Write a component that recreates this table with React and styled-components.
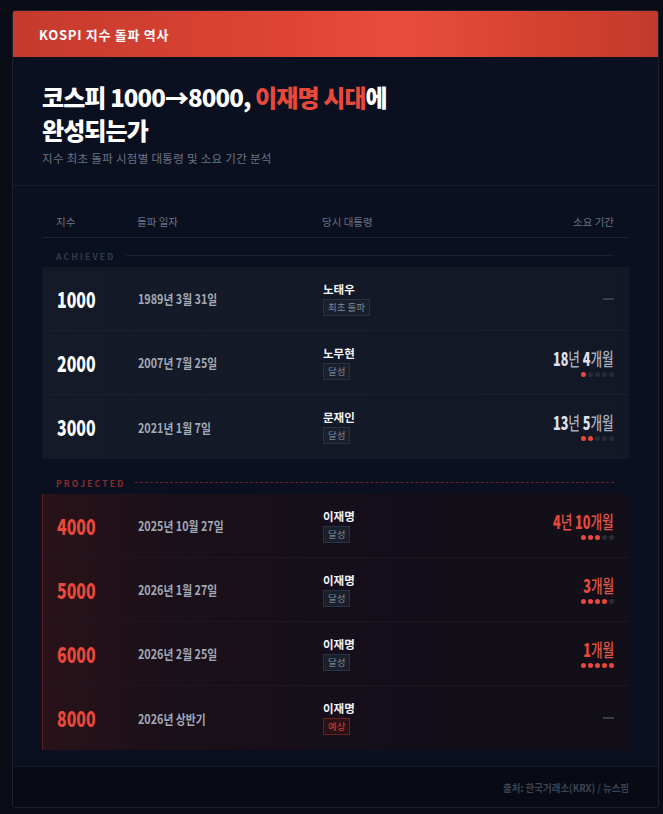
import React from "react";
import styled, { createGlobalStyle } from "styled-components";

const GlobalStyle = createGlobalStyle`
  html, body { margin: 0; padding: 0; background: #090c15; }
  body { font-family: "Noto Sans CJK KR", "Noto Sans", sans-serif; }
`;

// no condensed family is installed, so narrow type is squeezed horizontally
const Narrow = styled.span`
  display: inline-block;
  white-space: nowrap;
  transform: scaleX(${(p) => p.x || 0.78});
  transform-origin: ${(p) => (p.right ? "right" : "left")} center;
`;

const Page = styled.div`
  padding: 10px 4px 8px 12px;
  background: #090c15;
`;

const Card = styled.div`
  width: 645px;
  border: 1px solid #1b2130;
  border-radius: 3px;
  background: #0b1020;
  overflow: hidden;
`;

const TopBar = styled.div`
  height: 46px;
  display: flex;
  align-items: center;
  padding: 0 26px;
  background: linear-gradient(90deg, #c53a2d 0%, #e04535 45%, #e84d3d 60%, #d2402f 85%, #c23a2c 100%);
  color: #fff;
  font-size: 13px;
  font-weight: 700;
  letter-spacing: 0.7px;
`;

const Intro = styled.div`
  padding: 23px 29px 18px;
  border-bottom: 1px solid #161c2a;
`;

const Title = styled.h1`
  margin: 0;
  font-size: 24px;
  line-height: 33px;
  font-weight: 900;
  letter-spacing: -0.9px;
  color: #ffffff;
`;

const Accent = styled.span`
  color: #e8493b;
`;

const Subtitle = styled.div`
  margin-top: 3px;
  font-size: 11.5px;
  line-height: 18px;
  color: #6b7385;
  letter-spacing: 0.3px;
`;

const TableArea = styled.div`
  padding: 20px 29px 16px;
  border-bottom: 1px solid #161c2a;
`;

const Grid = `
  display: grid;
  grid-template-columns: 81px 185px 1fr 160px;
  align-items: center;
`;

const HeadRow = styled.div`
  ${Grid}
  height: 31px;
  padding: 0 15px 0 14px;
  border-bottom: 1px solid #1c2232;
  font-size: 10.5px;
  color: #6b7385;
`;

const HeadCell = styled.div`
  text-align: ${(p) => (p.right ? "right" : "left")};
`;

const GroupLabel = styled.div`
  display: flex;
  align-items: center;
  gap: 10px;
  height: 23px;
  margin-top: ${(p) => p.top}px;
  padding: 0 15px 0 14px;
  font-size: 8.5px;
  font-weight: 700;
  letter-spacing: 2.2px;
  color: ${(p) => (p.red ? "#8e2b2b" : "#343c4d")};
  &::after {
    content: "";
    flex: 1;
    border-top: 1px ${(p) => (p.red ? "dashed #6e2327" : "solid #1a2030")};
  }
`;

const Row = styled.div`
  ${Grid}
  height: 64px;
  padding: 0 15px 0 14px;
  box-sizing: border-box;
  border-bottom: 1px solid ${(p) => (p.red ? "#1f1620" : "#1a2030")};
  border-left: 1px solid ${(p) => (p.red ? "#5c1e22" : "transparent")};
  background: ${(p) =>
    p.red
      ? "linear-gradient(90deg, #2a1219 0%, #1a1019 22%, #130f1a 60%, #120f19 100%)"
      : "linear-gradient(90deg, #141a28 0%, #121826 100%)"};
  &:last-child { border-bottom: none; }
`;

const Index = styled.div`
  font-size: 22px;
  font-weight: 900;
  line-height: 26px;
  margin-top: -2px;
  color: ${(p) => (p.red ? "#e8493b" : "#ffffff")};
`;

const DateText = styled.div`
  font-size: 13px;
  font-weight: 700;
  color: #a3a9b6;
`;

const Who = styled.div`
  display: flex;
  flex-direction: column;
  align-items: flex-start;
  gap: 3px;
`;

const Name = styled.div`
  font-size: 11.5px;
  font-weight: 700;
  color: #f2f4f8;
  line-height: 14px;
`;

const Tag = styled.span`
  font-size: 9.5px;
  line-height: 15px;
  padding: 0 4px;
  border: 1px solid ${(p) => (p.red ? "#6b1d1f" : "#2a3142")};
  background: ${(p) => (p.red ? "#2a1116" : "#1a1f2c")};
  color: ${(p) => (p.red ? "#d04237" : "#7d8596")};
`;

const Span = styled.div`
  display: flex;
  flex-direction: column;
  align-items: flex-end;
  gap: 5px;
`;

const Duration = styled.div`
  font-size: 18px;
  font-weight: 900;
  line-height: 18px;
  color: ${(p) => (p.red ? "#e8493b" : "#dfe2ea")};
`;

const Unit = styled.span`
  font-weight: 500;
  color: ${(p) => (p.red ? "#e25546" : "#a7adba")};
`;

const Dots = styled.div`
  display: flex;
  gap: 2px;
`;

const Dot = styled.i`
  width: 5px;
  height: 5px;
  border-radius: 50%;
  background: ${(p) => (p.on ? "#e8493b" : "#262c3a")};
`;

const Dash = styled.div`
  width: 11px;
  height: 2px;
  background: #363d4c;
`;

const Footer = styled.div`
  height: 40px;
  display: flex;
  align-items: center;
  justify-content: flex-end;
  padding: 0 29px;
  background: #080b14;
  font-size: 10.5px;
  font-weight: 700;
  color: #3c4353;
`;

const achieved = [
  { idx: "1000", date: "1989년 3월 31일", who: "노태우", tag: "최초 돌파" },
  { idx: "2000", date: "2007년 7월 25일", who: "노무현", tag: "달성", dur: [["18", "년 "], ["4", "개월"]], dots: 1 },
  { idx: "3000", date: "2021년 1월 7일", who: "문재인", tag: "달성", dur: [["13", "년 "], ["5", "개월"]], dots: 2 },
];

const projected = [
  { idx: "4000", date: "2025년 10월 27일", who: "이재명", tag: "달성", dur: [["4", "년 "], ["10", "개월"]], dots: 3 },
  { idx: "5000", date: "2026년 1월 27일", who: "이재명", tag: "달성", dur: [["3", "개월"]], dots: 4 },
  { idx: "6000", date: "2026년 2월 25일", who: "이재명", tag: "달성", dur: [["1", "개월"]], dots: 5 },
  { idx: "8000", date: "2026년 상반기", who: "이재명", tag: "예상", tagRed: true },
];

const Line = ({ item, red }) => (
  <Row red={red}>
    <Index red={red}>
      <Narrow x={0.72}>{item.idx}</Narrow>
    </Index>
    <DateText>
      <Narrow x={0.83}>{item.date}</Narrow>
    </DateText>
    <Who>
      <Name>{item.who}</Name>
      <Tag red={item.tagRed}>{item.tag}</Tag>
    </Who>
    <Span>
      {item.dur ? (
        <>
          <Duration red={red}>
            <Narrow x={0.7} right>
              {item.dur.map(([n, u]) => (
                <React.Fragment key={u}>
                  {n}
                  <Unit red={red}>{u}</Unit>
                </React.Fragment>
              ))}
            </Narrow>
          </Duration>
          <Dots>
            {[0, 1, 2, 3, 4].map((i) => (
              <Dot key={i} on={i < item.dots} />
            ))}
          </Dots>
        </>
      ) : (
        <Dash />
      )}
    </Span>
  </Row>
);

const App = () => (
  <Page>
    <GlobalStyle />
    <Card>
      <TopBar>KOSPI 지수 돌파 역사</TopBar>
      <Intro>
        <Title>
          코스피 1000→8000, <Accent>이재명 시대</Accent>에
          <br />
          완성되는가
        </Title>
        <Subtitle>지수 최초 돌파 시점별 대통령 및 소요 기간 분석</Subtitle>
      </Intro>
      <TableArea>
        <HeadRow>
          <HeadCell>지수</HeadCell>
          <HeadCell>돌파 일자</HeadCell>
          <HeadCell>당시 대통령</HeadCell>
          <HeadCell right>소요 기간</HeadCell>
        </HeadRow>
        <GroupLabel top={6}>ACHIEVED</GroupLabel>
        <div>
          {achieved.map((it) => (
            <Line key={it.idx} item={it} />
          ))}
        </div>
        <GroupLabel top={12} red>PROJECTED</GroupLabel>
        <div>
          {projected.map((it) => (
            <Line key={it.idx} item={it} red />
          ))}
        </div>
      </TableArea>
      <Footer>
        <Narrow x={0.9} right>출처: 한국거래소(KRX) / 뉴스핌</Narrow>
      </Footer>
    </Card>
  </Page>
);

export default App;
